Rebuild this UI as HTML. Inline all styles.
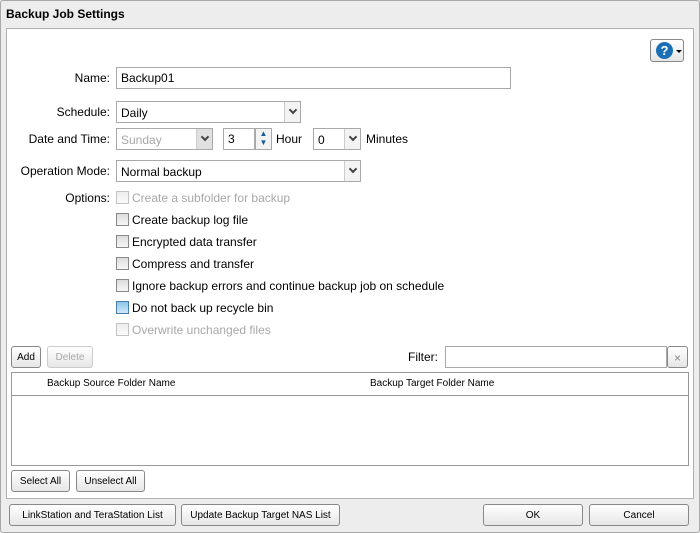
<!DOCTYPE html>
<html><head><style>
*{box-sizing:border-box;margin:0;padding:0}
body{width:700px;height:533px;background:#ececec;font-family:"Liberation Sans",sans-serif;font-size:12px;color:#000;position:relative;overflow:hidden}
.a{position:absolute}
.outer{left:0;top:0;width:700px;height:533px;border:1px solid #a8a8a8;border-radius:3px;background:#ededed}
.title{left:6px;top:7px;font-weight:bold;font-size:12px}
.panel{left:6px;top:28px;width:688px;height:471px;background:#fff;border:1px solid #b0b0b0}
.lbl{text-align:right;width:110px;left:0}
.inp{border:1px solid #a9a9a9;background:#fff;height:22px;padding:3px 4px;font-size:12px}
.sel{border:1px solid #a9a9a9;background:#fff;height:22px;padding:4px 4px 2px}
.arr{position:absolute;right:0;top:0;width:16px;height:20px;border-left:1px solid #ccc;background:#f3f3f3}
.arr:after{content:"";position:absolute;left:5px;top:5px;width:4px;height:4px;border-right:2px solid #444;border-bottom:2px solid #444;transform:rotate(45deg)}
.cb{width:13px;height:13px;border:1px solid #888;background:linear-gradient(#ddd,#f6f6f6)}
.dis{color:#a8a8a8}
.btn{border:1px solid #888;border-radius:3px;background:linear-gradient(#fff,#e6e6e6);font-size:10px;text-align:center;line-height:22px;height:22px}
</style></head><body>
<div class="a outer"></div>
<div class="a title">Backup Job Settings</div>
<div class="a panel"></div>
<div class="a btn" style="left:650px;top:39px;width:34px;height:23px"><span style="position:absolute;left:5px;top:2px;width:17px;height:17px;border-radius:50%;background:#1a6fb5;color:#fff;font-weight:bold;font-size:13px;line-height:17px">?</span><span style="position:absolute;left:25px;top:10px;border-left:3px solid transparent;border-right:3px solid transparent;border-top:3px solid #000"></span></div>

<div class="a lbl" style="top:71px">Name:</div>
<div class="a inp" style="left:116px;top:67px;width:395px">Backup01</div>

<div class="a lbl" style="top:105px">Schedule:</div>
<div class="a sel" style="left:116px;top:101px;width:185px">Daily<span class="arr"></span></div>

<div class="a lbl" style="top:132px">Date and Time:</div>
<div class="a sel dis" style="left:116px;top:128px;width:97px;background:#fff">Sunday<span class="arr" style="background:#e0e0e0"></span></div>
<div class="a inp" style="left:223px;top:128px;width:32px">3</div>
<div class="a" style="left:255px;top:128px;width:17px;height:22px;border:1px solid #a9a9a9;background:#f3f3f3;color:#1a5a9a;font-size:8px;line-height:9px;text-align:center">▲<br>▼</div>
<div class="a" style="left:276px;top:132px">Hour</div>
<div class="a sel" style="left:313px;top:128px;width:48px">0<span class="arr"></span></div>
<div class="a" style="left:366px;top:132px">Minutes</div>

<div class="a lbl" style="top:164px">Operation Mode:</div>
<div class="a sel" style="left:116px;top:160px;width:245px">Normal backup<span class="arr"></span></div>

<div class="a lbl" style="top:191px">Options:</div>
<div class="a cb" style="left:116px;top:191px;opacity:.5"></div><div class="a dis" style="left:132px;top:191px">Create a subfolder for backup</div>
<div class="a cb" style="left:116px;top:213px"></div><div class="a" style="left:132px;top:213px">Create backup log file</div>
<div class="a cb" style="left:116px;top:235px"></div><div class="a" style="left:132px;top:235px">Encrypted data transfer</div>
<div class="a cb" style="left:116px;top:257px"></div><div class="a" style="left:132px;top:257px">Compress and transfer</div>
<div class="a cb" style="left:116px;top:279px"></div><div class="a" style="left:132px;top:279px">Ignore backup errors and continue backup job on schedule</div>
<div class="a cb" style="left:116px;top:301px;background:linear-gradient(#8cc8ee,#cfe8f8);border-color:#4a7aa8"></div><div class="a" style="left:132px;top:301px">Do not back up recycle bin</div>
<div class="a cb" style="left:116px;top:323px;opacity:.5"></div><div class="a dis" style="left:132px;top:323px">Overwrite unchanged files</div>

<div class="a btn" style="left:11px;top:346px;width:30px">Add</div>
<div class="a btn" style="left:47px;top:346px;width:46px;color:#aaa;border-color:#ccc">Delete</div>
<div class="a" style="left:408px;top:350px">Filter:</div>
<div class="a inp" style="left:445px;top:346px;width:222px"></div>
<div class="a btn" style="left:667px;top:346px;width:21px;color:#888;font-size:12px">×</div>

<div class="a" style="left:11px;top:372px;width:678px;height:94px;border:1px solid #999;background:#fff"></div>
<div class="a" style="left:12px;top:395px;width:676px;height:1px;background:#999"></div>
<div class="a" style="left:47px;top:378px;font-size:10px">Backup Source Folder Name</div>
<div class="a" style="left:370px;top:378px;font-size:10px">Backup Target Folder Name</div>

<div class="a btn" style="left:11px;top:470px;width:59px">Select All</div>
<div class="a btn" style="left:76px;top:470px;width:69px">Unselect All</div>

<div class="a btn" style="left:9px;top:504px;width:167px">LinkStation and TeraStation List</div>
<div class="a btn" style="left:181px;top:504px;width:159px">Update Backup Target NAS List</div>
<div class="a btn" style="left:483px;top:504px;width:100px">OK</div>
<div class="a btn" style="left:589px;top:504px;width:100px">Cancel</div>
</body></html>
